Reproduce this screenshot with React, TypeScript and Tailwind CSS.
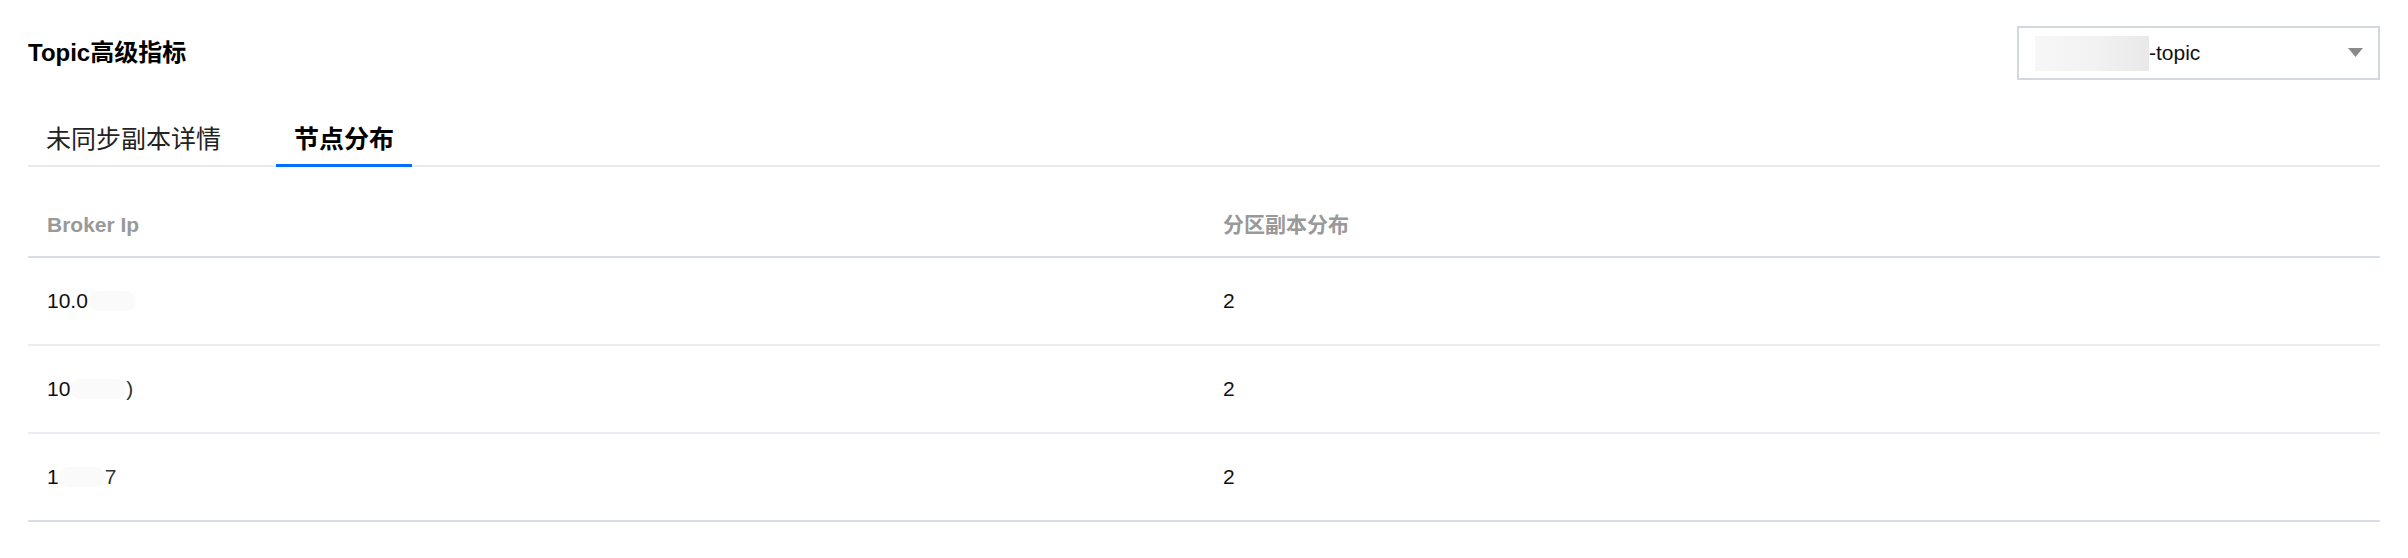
const font = "font-['Helvetica_Neue','Liberation_Sans','Noto_Sans_CJK_SC',sans-serif]"

const rows = [
	{ ip: '10.0', hideW: 'w-[48px]', count: 2 },
	{ ip: '10', hideW: 'w-[56px]', tail: ')', count: 2 },
	{ ip: '1', hideW: 'w-[46px]', tail: '7', count: 2 },
]

function TopicSelect() {
	return (
		<div className="flex h-[54px] w-[363px] items-center justify-between border-2 border-[#d3d8e0] bg-white pl-[16px] pr-[15px]">
			<div className="flex items-center">
				<span className="h-[35px] w-[114px] bg-gradient-to-r from-[#f7f7f7] via-[#f2f2f2] to-[#e9e9e9]" />
				<span className="text-[21px] text-[#111]">-topic</span>
			</div>
			<svg width="15" height="10" viewBox="0 0 15 10">
				<path d="M0 0 L15 0 L7.5 9 Z" fill="#8a8a8a" />
			</svg>
		</div>
	)
}

export default function App() {
	return (
		<div className={`${font} min-h-[558px] w-[2408px] bg-white px-[28px] pt-[26px]`}>
			<div className="flex items-center justify-between">
				<h2 className="text-[24px] font-bold leading-none text-black">Topic高级指标</h2>
				<TopicSelect />
			</div>

			<div className="mt-[41px] flex gap-[37px] border-b-2 border-[#e7eaef]">
				<div className="-mb-[2px] px-[18px] pb-[7px] text-[25px] leading-[37px] text-[#222]">
					未同步副本详情
				</div>
				<div className="-mb-[2px] border-b-[3px] border-[#006eff] px-[18px] pb-[6px] text-[25px] font-bold leading-[37px] text-black">
					节点分布
				</div>
			</div>

			<div className="mt-[27px]">
				<div className="grid h-[64px] grid-cols-2 items-center border-b-2 border-[#d9dde5] text-[21px] font-bold text-[#999]">
					<div className="px-[19px]">Broker Ip</div>
					<div className="px-[19px]">分区副本分布</div>
				</div>
				{rows.map((r, i) => (
					<div
						key={i}
						className={`grid h-[88px] grid-cols-2 items-center text-[21px] text-[#111] ${
							i === rows.length - 1 ? 'border-b-2 border-[#d9dde5]' : 'border-b-2 border-[#eaedf1]'
						}`}
					>
						<div className="flex items-center px-[19px]">
							<span>{r.ip}</span>
							<span className={`${r.hideW} h-[20px] rounded-full bg-[#fafafa]`} />
							{r.tail && <span className="text-[#333]">{r.tail}</span>}
						</div>
						<div className="px-[19px]">{r.count}</div>
					</div>
				))}
			</div>
		</div>
	)
}
